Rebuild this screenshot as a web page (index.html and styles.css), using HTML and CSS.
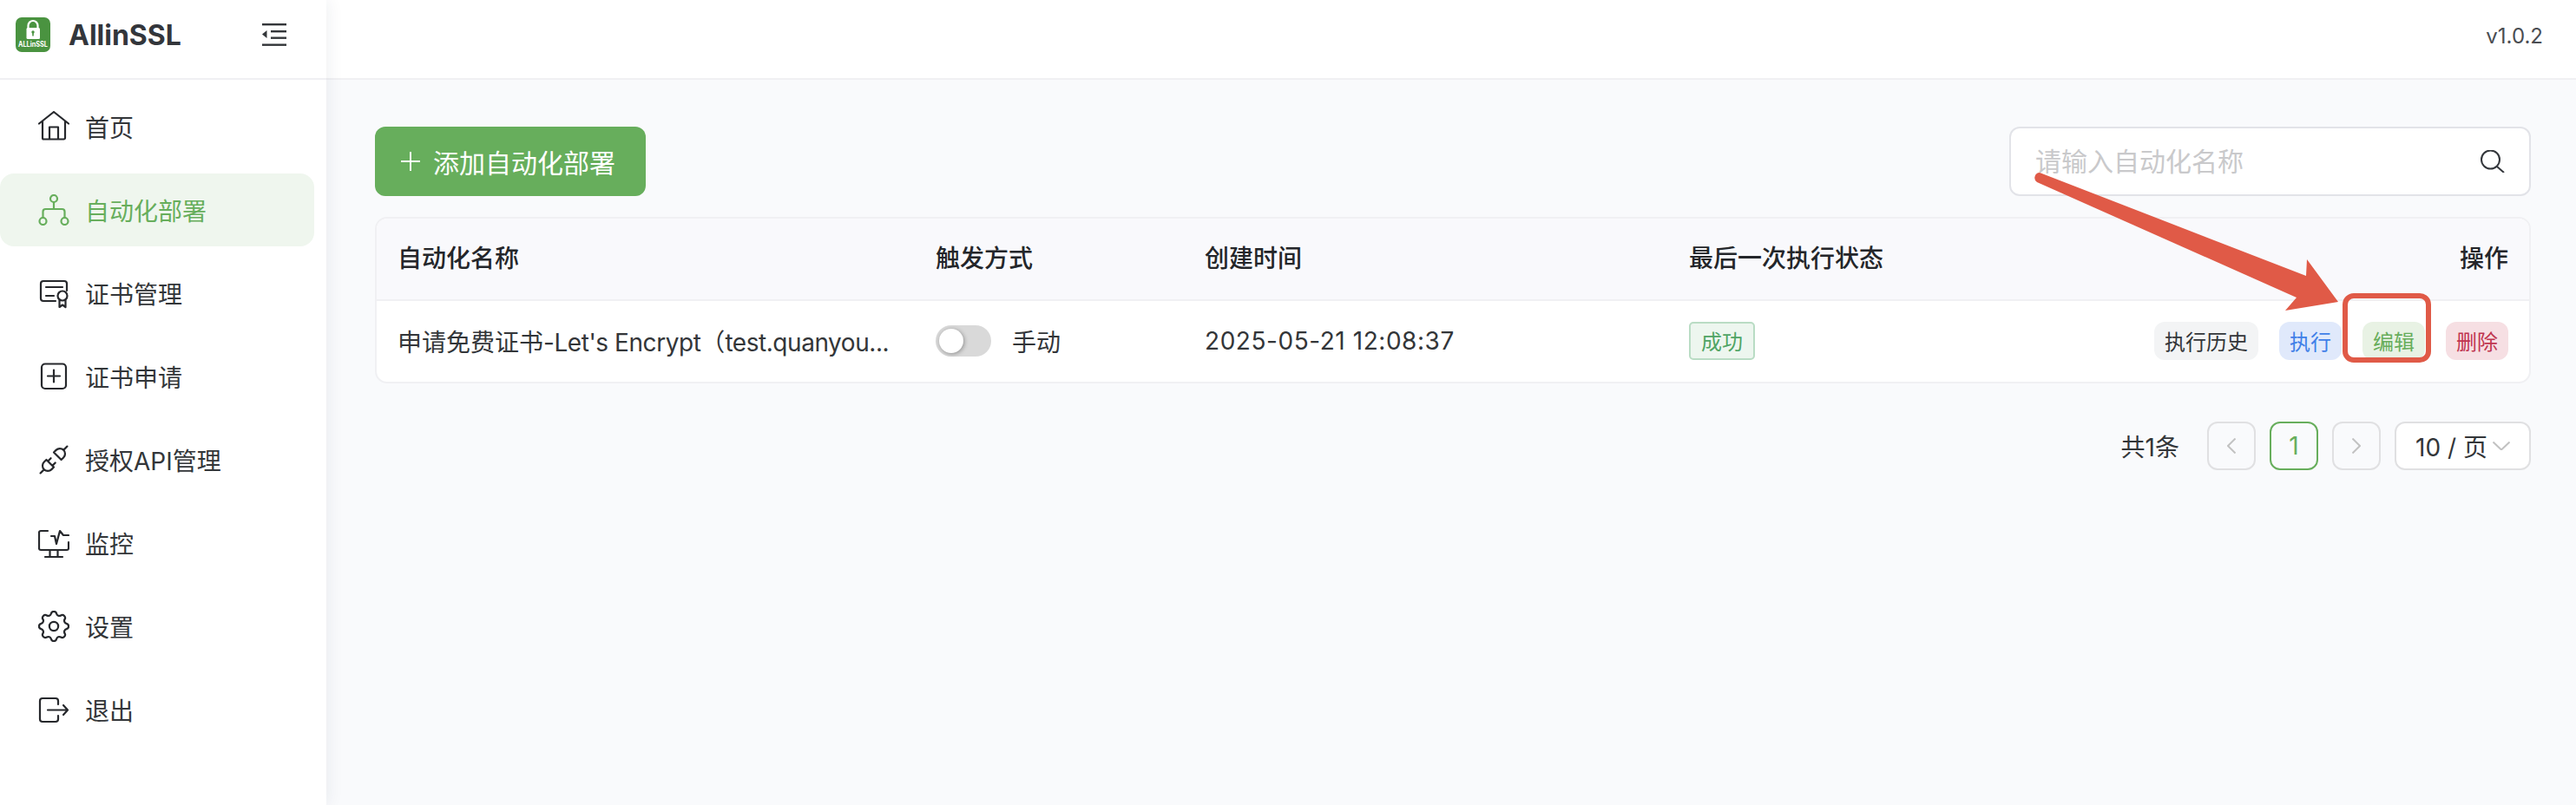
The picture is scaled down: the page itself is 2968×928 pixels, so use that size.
FILE: index.html
```html
<!DOCTYPE html>
<html lang="zh-CN">
<head>
<meta charset="utf-8">
<title>AllinSSL</title>
<link rel="stylesheet" href="styles.css">
</head>
<body>
<aside class="sidebar">
  <div class="brand">
    <svg class="logo" viewBox="0 0 40 40">
      <rect width="40" height="40" rx="7" fill="#4a9340"/>
      <path d="M14.500 13V9.500a5.500 5.500 0 0 1 11 0V13" fill="none" stroke="#fff" stroke-width="2.200"/>
      <rect x="12.500" y="12" width="15.500" height="13" rx="1.500" fill="#fff"/>
      <circle cx="20" cy="17" r="1.700" fill="#4a9340"/>
      <rect x="19.200" y="17" width="1.600" height="4.500" fill="#4a9340"/>
      <text class="logo-text" x="20" y="33.500" text-anchor="middle" textLength="34" lengthAdjust="spacingAndGlyphs">ALLinSSL</text>
    </svg>
    <span class="brand-name">AllinSSL</span>
    <svg class="collapse" viewBox="0 0 28 26" fill="#333639">
      <rect x="0" y="0" width="28" height="2.400"/>
      <rect x="10" y="8" width="18" height="2.400"/>
      <rect x="10" y="15.500" width="18" height="2.400"/>
      <rect x="0" y="23.500" width="28" height="2.400"/>
      <path d="M5.500 8V17L0 12.500z"/>
    </svg>
  </div>
  <nav class="nav">
    <a class="nav-item">
      <svg class="nav-icon" viewBox="0 0 36 36"><path d="M1 14.500 18 1l17 13.500M5 11.500V31a1.500 1.500 0 0 0 1.500 1.500h23A1.500 1.500 0 0 0 31 31V11.500M13 32V18.500h10V32"/></svg>
      <span>首页</span>
    </a>
    <a class="nav-item active">
      <svg class="nav-icon" viewBox="0 0 36 36"><circle cx="18" cy="5" r="4"/><circle cx="5.500" cy="31" r="4"/><circle cx="30.500" cy="31" r="4"/><path d="M18 9v8M5.500 27v-7a3 3 0 0 1 3-3h19a3 3 0 0 1 3 3v7"/></svg>
      <span>自动化部署</span>
    </a>
    <a class="nav-item">
      <svg class="nav-icon" viewBox="0 0 36 36"><path d="M20 27H6a3 3 0 0 1-3-3V7a3 3 0 0 1 3-3h24a3 3 0 0 1 3 3v8M9 11h19M9 21h9"/><circle cx="28" cy="21" r="5.500"/><path d="M24.500 26v8l3.500-2.500 3.500 2.500v-8"/></svg>
      <span>证书管理</span>
    </a>
    <a class="nav-item">
      <svg class="nav-icon" viewBox="0 0 36 36"><rect x="4" y="3.500" width="28" height="28.500" rx="4"/><path d="M18 10.500v14M11 17.500h14"/></svg>
      <span>证书申请</span>
    </a>
    <a class="nav-item">
      <svg class="nav-icon plug" viewBox="1.500 1.500 21 21"><path d="m7 12 5 5-1.500 1.500a3.536 3.536 0 1 1-5-5L7 12zM17 12l-5-5 1.500-1.500a3.536 3.536 0 1 1 5 5L17 12zM3 21l2.500-2.500M18.500 5.500 21 3M10 11l-2 2M13 14l-2 2"/></svg>
      <span>授权API管理</span>
    </a>
    <a class="nav-item">
      <svg class="nav-icon" viewBox="0 0 36 36"><path d="M11 4H3a2 2 0 0 0-2 2v18a2 2 0 0 0 2 2h30a2 2 0 0 0 2-2v-7M15 10h4l2 9 4-15 4 5h6M13.500 26v8M22.500 26v8M8 34h20"/></svg>
      <span>监控</span>
    </a>
    <a class="nav-item">
      <svg class="nav-icon gear" viewBox="2.500 2.500 19 19"><path d="M10.325 4.317c.426-1.756 2.924-1.756 3.350 0a1.724 1.724 0 0 0 2.573 1.066c1.543-.94 3.310.826 2.370 2.370a1.724 1.724 0 0 0 1.065 2.572c1.756.426 1.756 2.924 0 3.350a1.724 1.724 0 0 0-1.066 2.573c.94 1.543-.826 3.310-2.370 2.370a1.724 1.724 0 0 0-2.572 1.065c-.426 1.756-2.924 1.756-3.350 0a1.724 1.724 0 0 0-2.573-1.066c-1.543.94-3.310-.826-2.370-2.370a1.724 1.724 0 0 0-1.065-2.572c-1.756-.426-1.756-2.924 0-3.350a1.724 1.724 0 0 0 1.066-2.573c-.94-1.543.826-3.310 2.370-2.370 1 .608 2.296.07 2.572-1.065z"/><circle cx="12" cy="12" r="2.700"/></svg>
      <span>设置</span>
    </a>
    <a class="nav-item">
      <svg class="nav-icon" viewBox="0 0 36 36"><path d="M23 12V8a3 3 0 0 0-3-3H5a3 3 0 0 0-3 3v21a3 3 0 0 0 3 3h15a3 3 0 0 0 3-3v-4M11 18.500h22.500M29 13l5 5.500-5 5.500"/></svg>
      <span>退出</span>
    </a>
  </nav>
</aside>
<div class="main">
  <header class="topbar"><span class="version">v1.0.2</span></header>
  <main class="content">
    <div class="toolbar">
      <button class="add-btn">
        <svg class="add-icon" viewBox="0 0 22 22"><path d="M11 0v22M0 11h22"/></svg>
        <span>添加自动化部署</span>
      </button>
      <label class="search">
        <input class="search-input" placeholder="请输入自动化名称">
        <svg class="search-icon" viewBox="0 0 28 26"><circle cx="11.500" cy="11" r="10.500"/><path d="m19 19 8 7"/></svg>
      </label>
    </div>
    <div class="table-wrap">
      <table class="table">
        <colgroup>
          <col class="col-name"><col class="col-trigger"><col class="col-time"><col>
        </colgroup>
        <thead>
          <tr>
            <th>自动化名称</th>
            <th>触发方式</th>
            <th>创建时间</th>
            <th>最后一次执行状态</th>
            <th class="right">操作</th>
          </tr>
        </thead>
        <tbody>
          <tr>
            <td><div class="ellipsis">申请免费证书<span class="latin">-Let's Encrypt</span>（<span class="latin">test.quanyou...</span></div></td>
            <td>
              <div class="trigger"><span class="switch"><span class="knob"></span></span><span>手动</span></div>
            </td>
            <td class="time">2025-05-21 12:08:37</td>
            <td><span class="status">成功</span></td>
            <td>
              <div class="actions">
                <span class="act act-gray">执行历史</span>
                <span class="act act-blue">执行</span>
                <span class="act act-green">编辑</span>
                <span class="act act-red">删除</span>
              </div>
            </td>
          </tr>
        </tbody>
      </table>
    </div>
    <div class="pager">
      <span class="total">共1条</span>
      <span class="page-btn"><svg class="chev" viewBox="0 0 10 18"><path d="M9.500.5 1 9l8.500 8.500"/></svg></span>
      <span class="page-btn current">1</span>
      <span class="page-btn"><svg class="chev" viewBox="0 0 10 18"><path d="M.5.5 9 9 .5 17.500"/></svg></span>
      <span class="page-size">10 / 页<svg class="chev-down" viewBox="0 0 20 10"><path d="M.5.5 10 9.500 19.500.5"/></svg></span>
    </div>
  </main>
</div>
<svg class="annotation" viewBox="0 0 2968 928">
  <path class="arrow" d="M2350 199 2657 318 2658 299 2694 348 2633 358 2646 343 2347 210a6 6 0 0 1 3-11z"/>
  <rect class="mark" x="2702" y="341" width="96" height="74" rx="10"/>
</svg>
</body>
</html>
```

FILE: styles.css
```css
* { box-sizing: border-box; }

html, body { height: 100%; }

body {
  margin: 0;
  display: flex;
  height: 928px;
  overflow: hidden;
  position: relative;
  background: #f9fafc;
  color: #333639;
  font-family: Inter, "Noto Sans CJK SC", sans-serif;
  font-size: 28px;
}

.sidebar {
  width: 376px;
  flex: none;
  background: #fff;
  box-shadow: 2px 0 18px rgba(30, 40, 70, 0.07);
  position: relative;
  z-index: 1;
}

.brand {
  height: 92px;
  display: flex;
  align-items: center;
  padding: 0 46px 10px 18px;
  border-bottom: 2px solid #f0f0f3;
}

.logo { width: 40px; height: 40px; flex: none; }

.logo-text {
  fill: #fff;
  font-size: 8.500px;
  font-weight: 700;
  font-family: Inter, sans-serif;
}

.brand-name {
  margin-left: 21px;
  font-size: 32px;
  font-weight: 700;
  color: #33363b;
  flex: 1;
}

.collapse { width: 28px; height: 26px; flex: none; }

.nav {
  padding: 12px 14px 0 0;
  display: flex;
  flex-direction: column;
  gap: 12px;
}

.nav-item {
  height: 84px;
  display: flex;
  align-items: center;
  gap: 18px;
  padding-left: 44px;
  border-radius: 16px;
  color: #333639;
}

.nav-item.active {
  background: #eff6ee;
  color: #67ae5c;
}

.nav-icon {
  width: 36px;
  height: 36px;
  flex: none;
  fill: none;
  stroke: #26282c;
  stroke-width: 2.200;
  stroke-linecap: round;
  stroke-linejoin: round;
}

.nav-icon.plug { stroke-width: 1.300; }
.nav-icon.gear { stroke-width: 1.200; }
.active .nav-icon { stroke: #67ae5c; }

.main {
  flex: 1;
  min-width: 0;
  display: flex;
  flex-direction: column;
}

.topbar {
  height: 92px;
  flex: none;
  background: #fff;
  border-bottom: 2px solid #f0f0f3;
  display: flex;
  justify-content: flex-end;
  align-items: center;
  padding: 0 38px 8px 0;
}

.version { font-size: 24px; color: #4a4d52; }

.content { padding: 54px 52px 0 56px; }

.toolbar {
  display: flex;
  justify-content: space-between;
  align-items: center;
  height: 80px;
  margin-bottom: 24px;
}

.add-btn {
  height: 80px;
  width: 312px;
  display: flex;
  align-items: center;
  gap: 15px;
  padding: 0 0 0 30px;
  border: 0;
  border-radius: 12px;
  background: #67ae5c;
  color: #fff;
  font: inherit;
  font-size: 30px;
}

.add-icon {
  width: 22px;
  height: 22px;
  flex: none;
  fill: none;
  stroke: #fff;
  stroke-width: 2;
}

.search {
  width: 601px;
  height: 80px;
  display: flex;
  align-items: center;
  padding: 0 28px 0 28px;
  border: 2px solid #e2e3e8;
  border-radius: 12px;
  background: #fff;
}

.search-input {
  flex: 1;
  min-width: 0;
  border: 0;
  outline: 0;
  padding: 0;
  font: inherit;
  font-size: 30px;
  background: transparent;
}

.search-input::placeholder { color: #c9c9cb; }

.search-icon {
  width: 28px;
  height: 26px;
  flex: none;
  fill: none;
  stroke: #33363b;
  stroke-width: 2;
}

.table-wrap {
  border: 2px solid #f0f0f3;
  border-radius: 14px;
  overflow: hidden;
  background: #fff;
}

.table {
  width: 100%;
  border-collapse: collapse;
  table-layout: fixed;
}

.col-name { width: 618px; }
.col-trigger { width: 310px; }
.col-time { width: 558px; }

.table th {
  height: 94px;
  padding: 0 26px 5px;
  background: #f9f9fc;
  border-bottom: 2px solid #f0f0f3;
  text-align: left;
  font-weight: 500;
  color: #24262a;
}

.table th:first-child,
.table td:first-child { padding-left: 24px; }

.table th.right { text-align: right; padding-right: 24px; }

.table td {
  height: 94px;
  padding: 0 26px 2px;
}

.table td:last-child { padding-right: 24px; }

.ellipsis {
  white-space: nowrap;
  overflow: hidden;
  text-overflow: ellipsis;
}

.latin { letter-spacing: -0.45px; }

.time { letter-spacing: 0.55px; }

.trigger {
  display: flex;
  align-items: center;
  gap: 24px;
}

.switch {
  width: 64px;
  height: 36px;
  border-radius: 18px;
  background: #d9d9d9;
  padding: 4px;
  flex: none;
}

.knob {
  display: block;
  width: 28px;
  height: 28px;
  border-radius: 50%;
  background: #fff;
  box-shadow: 1px 1px 5px rgba(0, 0, 0, 0.35);
}

.status {
  display: inline-flex;
  align-items: center;
  justify-content: center;
  width: 76px;
  height: 44px;
  border: 2px solid #b9dcc4;
  border-radius: 5px;
  background: #edf6ef;
  color: #4fa464;
  font-size: 24px;
  vertical-align: middle;
}

.actions {
  display: flex;
  justify-content: flex-end;
  gap: 24px;
}

.act {
  height: 44px;
  padding: 0 12px;
  border-radius: 12px;
  display: flex;
  align-items: center;
  font-size: 24px;
}

.act-gray { background: #f3f4f5; color: #333639; }
.act-blue { background: #e0e9fb; color: #3f7fe8; }
.act-green { background: #e8f2e4; color: #67ad5b; }
.act-red { background: #f6dfe3; color: #c0354f; }

.pager {
  display: flex;
  justify-content: flex-end;
  align-items: center;
  gap: 16px;
  margin-top: 44px;
}

.total { margin-right: 16px; }

.page-btn {
  width: 56px;
  height: 56px;
  display: flex;
  align-items: center;
  justify-content: center;
  border: 2px solid #e0e0e2;
  border-radius: 12px;
}

.page-btn.current { border-color: #67ae5c; color: #67ae5c; }

.chev {
  width: 10px;
  height: 18px;
  fill: none;
  stroke: #c2c2c2;
  stroke-width: 2;
}

.page-size {
  width: 157px;
  height: 56px;
  display: flex;
  align-items: center;
  justify-content: space-between;
  padding: 0 22px;
  border: 2px solid #e0e0e2;
  border-radius: 12px;
  background: #fff;
}

.chev-down {
  width: 20px;
  height: 10px;
  fill: none;
  stroke: #c2c2c2;
  stroke-width: 2;
}

.annotation {
  position: absolute;
  inset: 0;
  width: 2968px;
  height: 928px;
  z-index: 2;
  pointer-events: none;
}

.arrow { fill: #e05a47; }

.mark {
  fill: none;
  stroke: #e05a47;
  stroke-width: 6;
}
```
